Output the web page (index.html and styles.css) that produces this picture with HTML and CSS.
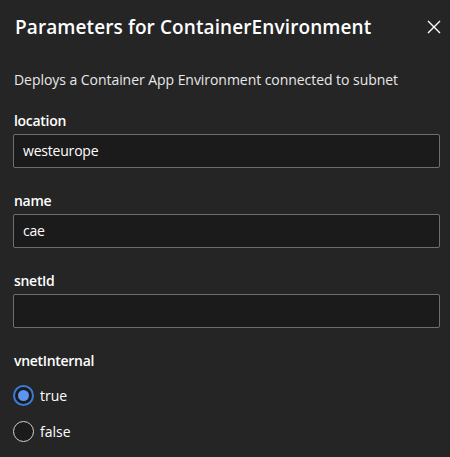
FILE: index.html
```html
<!DOCTYPE html>
<html>
<head>
<meta charset="utf-8">
<link rel="stylesheet" href="styles.css">
</head>
<body>
<div class="panel">
  <div class="header">
    <h1 class="title">Parameters for ContainerEnvironment</h1>
    <button class="close" aria-label="Close">
      <svg width="14" height="14" viewBox="0 0 14 14"><path d="M1 1L13 13M13 1L1 13" stroke="#ffffff" stroke-width="1.4" fill="none"/></svg>
    </button>
  </div>
  <p class="desc">Deploys a Container App Environment connected to subnet</p>
  <div class="field">
    <label class="label">location</label>
    <div class="input">westeurope</div>
  </div>
  <div class="field">
    <label class="label">name</label>
    <div class="input">cae</div>
  </div>
  <div class="field">
    <label class="label">snetId</label>
    <div class="input"></div>
  </div>
  <div class="field">
    <label class="label">vnetInternal</label>
    <div class="radios">
      <div class="radio checked"><span class="circle"></span><span>true</span></div>
      <div class="radio"><span class="circle"></span><span>false</span></div>
    </div>
  </div>
</div>
</body>
</html>
```
FILE: styles.css
```css
html, body {
  margin: 0;
  padding: 0;
  background: #252526;
  height: 100%;
}
body {
  font-family: "Open Sans", "Noto Sans", sans-serif;
  color: #ffffff;
}
.panel {
  padding: 0 10px 0 13px;
}
.header {
  display: flex;
  align-items: center;
  justify-content: space-between;
  height: 54px;
  padding-left: 2px;
}
.title {
  margin: 0;
  font-size: 19px;
  font-weight: 600;
  letter-spacing: 0.1px;
}
.close {
  background: none;
  border: none;
  padding: 0;
  width: 16px;
  height: 16px;
  display: flex;
  align-items: center;
  justify-content: center;
  margin-right: -2px;
}
.desc {
  margin: 16px 0 0 1px;
  font-size: 14px;
  line-height: 20px;
  color: #e8e8e8;
  letter-spacing: -0.05px;
}
.field {
  margin-top: 21px;
}
.field + .field {
  margin-top: 23px;
}
.label {
  display: block;
  font-size: 14px;
  font-weight: 600;
  line-height: 20px;
  margin-left: 1px;
  letter-spacing: -0.3px;
}
.input {
  margin-top: 3px;
  box-sizing: border-box;
  height: 34px;
  width: 427px;
  border: 1px solid #6e6e6e;
  border-radius: 2px;
  background: #1b1b1b;
  font-size: 14px;
  line-height: 32px;
  padding-left: 9px;
  color: #ffffff;
  letter-spacing: -0.2px;
}
.radios {
  display: flex;
  flex-direction: column;
  gap: 14px;
  margin-top: 13px;
}
.radio {
  display: flex;
  align-items: center;
  gap: 6px;
  font-size: 14px;
  height: 22px;
}
.circle {
  box-sizing: border-box;
  width: 21px;
  height: 21px;
  border-radius: 50%;
  border: 1px solid #d0d0d0;
  background: #1b1b1b;
  position: relative;
}
.radio.checked .circle {
  border: 2px solid #3b7bd8;
  background: #1b1b1b;
}
.radio.checked .circle::after {
  content: "";
  position: absolute;
  left: 3px;
  top: 3px;
  width: 11px;
  height: 11px;
  border-radius: 50%;
  background: #5b95f0;
}
```
